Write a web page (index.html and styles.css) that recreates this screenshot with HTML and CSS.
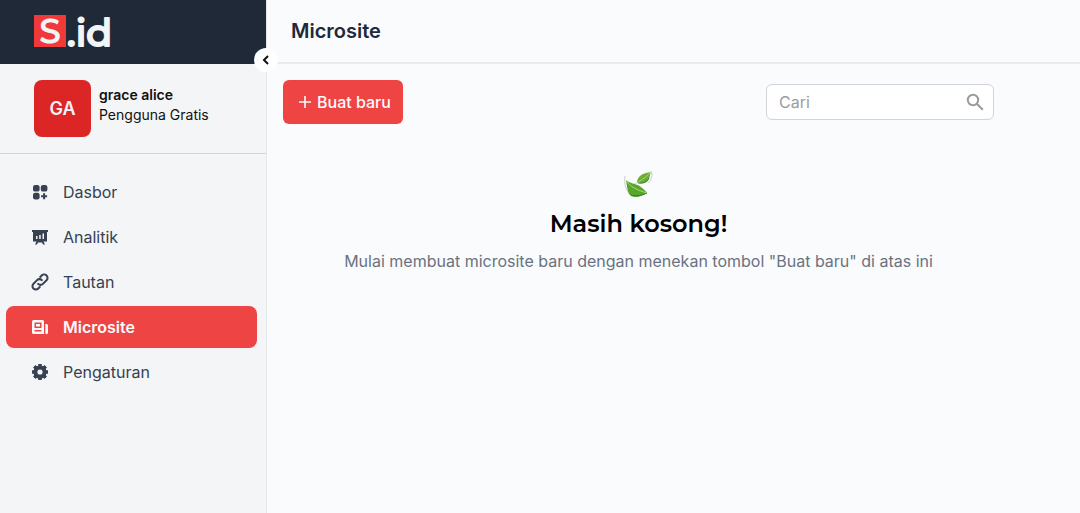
FILE: index.html
```html
<!DOCTYPE html>
<html lang="id">
<head>
<meta charset="utf-8">
<meta name="viewport" content="width=device-width, initial-scale=1">
<title>Microsite</title>
<link rel="stylesheet" href="styles.css">
</head>
<body>
<div class="app">
  <aside class="sidebar">
    <div class="brand">
      <a class="logo" href="#">
        <svg width="78" height="34" viewBox="0 0 78 34">
          <rect x="0" y="0" width="32" height="32" fill="#f03a3a"/>
          <text class="logo-mark" x="16" y="28" text-anchor="middle">S</text>
          <text class="logo-rest" x="33" y="31">.id</text>
        </svg>
      </a>
      <button class="collapse" type="button" aria-label="Ciutkan menu">
        <svg width="12" height="12" viewBox="0 0 12 12"><path d="M8 2 4 6l4 4" fill="none" stroke="currentColor" stroke-width="2"/></svg>
      </button>
    </div>
    <div class="profile">
      <div class="avatar">GA</div>
      <div class="who">
        <div class="name">grace alice</div>
        <div class="plan">Pengguna Gratis</div>
      </div>
    </div>
    <nav class="menu">
      <a class="item" href="#">
        <svg class="icon" viewBox="0 0 18 18" fill="currentColor"><rect x="2" y="2" width="6.600" height="6.600" rx="2.200"/><rect x="9.800" y="2" width="6.600" height="6.600" rx="2.200"/><rect x="2" y="9.800" width="6.600" height="6.600" rx="2.200"/><path d="M13.100 10.200v6M10.100 13.200h6" stroke="currentColor" stroke-width="2"/></svg>
        Dasbor</a>
      <a class="item" href="#">
        <svg class="icon" viewBox="0 0 18 18"><path fill="currentColor" fill-rule="evenodd" d="M1 2h16v2h-1v9.500h-3.500l1.500 3h-2l-1-2H7l-1 2H4l1.500-3H2V4H1zM5 8v3h1.500V8zM8.200 7v4h1.500V7zM11.500 5.500V11H13V5.500z"/></svg>
        Analitik</a>
      <a class="item" href="#">
        <svg class="icon" viewBox="0 0 24 24" fill="none" stroke="currentColor" stroke-width="2.700" stroke-linecap="round" stroke-linejoin="round"><path d="M14.500 9.500a4.500 4.500 0 0 0-6.400 0L3.300 14.300a4.500 4.500 0 0 0 6.400 6.400l2-2M9.500 14.500a4.500 4.500 0 0 0 6.400 0l4.800-4.800a4.500 4.500 0 0 0-6.400-6.400l-2 2"/></svg>
        Tautan</a>
      <a class="item active" href="#" aria-current="page">
        <svg class="icon" viewBox="0 0 18 18"><path fill="currentColor" fill-rule="evenodd" d="M2.500 2h9a1.500 1.500 0 0 1 1.500 1.500V16H2.500A1.500 1.500 0 0 1 1 14.500v-11A1.500 1.500 0 0 1 2.500 2zM3.500 4.500v5.500h7V4.500zM5 6h4v2.500H5zM3.500 12v1.500h7V12zM14.300 6h1.200A1.500 1.500 0 0 1 17 7.500v7a1.500 1.500 0 0 1-2.700 1z"/></svg>
        Microsite</a>
      <a class="item" href="#">
        <svg class="icon" viewBox="0 0 18 18"><g fill="none" stroke="currentColor"><circle cx="9" cy="9" r="4.600" stroke-width="4"/><path stroke-width="3.600" d="M9 1v3M9 14v3M1 9h3M14 9h3M3.300 3.300l2.100 2.100M12.600 12.600l2.100 2.100M14.700 3.300l-2.100 2.100M5.400 12.600l-2.100 2.100"/></g></svg>
        Pengaturan</a>
    </nav>
  </aside>
  <div class="page">
    <header class="topbar"><h1>Microsite</h1></header>
    <main class="content">
      <div class="toolbar">
        <button class="create" type="button">
          <svg width="12" height="12" viewBox="0 0 12 12"><path d="M6 0v12M0 6h12" stroke="currentColor" stroke-width="1.600"/></svg>
          Buat baru
        </button>
        <label class="search">
          <input type="search" placeholder="Cari" aria-label="Cari">
          <svg width="18" height="18" viewBox="0 0 18 18" fill="none" stroke="currentColor" stroke-width="2"><circle cx="7" cy="7" r="5.200"/><path d="m10.800 10.800 6 6"/></svg>
        </label>
      </div>
      <section class="empty">
        <svg class="leaf" viewBox="0 0 30 28"><path d="M1 6c-1 6 0 12 4 17M27 1c2 4 1 8-3 12" fill="none" stroke="#c9cecb"/><path d="M27 2C20 3 14 5 13 12c4 2 10 2 12-3C26 6 26 4 27 2z" fill="#6aae35"/><path d="M2 10c5 5 13 2 21 13-5 4-15 6-18 1C3 20 3 15 2 10z" fill="#59a52d"/><path d="M11 14c5-3 10-6 16-12M2 10c4 7 11 10 21 13" fill="none" stroke="#b3dc72" stroke-width=".9"/><path d="M7 25c5 2 12 0 16-2M14 13c5 1 9-1 11-5" fill="none" stroke="#2f7621" stroke-width=".8"/></svg>
        <h2>Masih kosong!</h2>
        <p>Mulai membuat microsite baru dengan menekan tombol "Buat baru" di atas ini</p>
      </section>
    </main>
  </div>
</div>
</body>
</html>
```
FILE: styles.css
```css
* { box-sizing: border-box; }
body { margin: 0; font-family: Inter, "Liberation Sans", sans-serif; font-size: 16px; color: #111; background: #f9fbfd; }
h1, h2, p { margin: 0; }
a { color: inherit; text-decoration: none; }
button { font: inherit; border: 0; cursor: pointer; }

.app { display: grid; grid-template-columns: 267px 1fr; min-height: 100vh; }
.sidebar { background: #f3f5f7; border-right: 1px solid #e5e7eb; }
.brand { position: relative; display: flex; align-items: center; height: 64px; padding-left: 34px; background: #1f2937; }
.logo svg { display: block; overflow: visible; }
.logo text { font-family: Montserrat, Inter, sans-serif; fill: #f3f4f6; stroke: #f3f4f6; stroke-linejoin: round; }
.logo-mark { font-size: 34px; font-weight: 500; stroke-width: 1px; }
.logo-rest { font-size: 38px; font-weight: 500; stroke-width: 2px; }
.collapse { position: absolute; right: -12px; bottom: -8px; display: grid; place-items: center; width: 24px; height: 24px; padding: 0; border-radius: 50%; background: #fff; color: #111; }

.profile { display: flex; gap: 8px; padding: 16px 16px 16px 34px; border-bottom: 1px solid #d1d5db; }
.avatar { display: grid; place-items: center; width: 57px; height: 57px; border-radius: 8px; background: #dc2626; color: #f3f4f6; font-size: 18px; font-weight: 600; }
.who { padding-top: 5px; font-size: 14px; line-height: 20px; }
.name { font-weight: 600; }

.menu { display: grid; gap: 3px; padding: 17px 9px 16px 6px; }
.item { display: flex; align-items: center; gap: 14px; height: 42px; padding-left: 25px; border-radius: 8px; color: #374151; font-size: 16px; }
.icon { width: 18px; height: 18px; }
.active { background: #ef4444; color: #f9fafb; font-weight: 600; }

.page { background: #f9fbfd; }
.topbar { display: flex; align-items: center; height: 64px; padding-left: 24px; border-bottom: 2px solid #e9ebee; }
.topbar h1 { font-size: 20px; font-weight: 600; color: #1f2937; }
.content { padding: 16px 86px 16px 16px; }
.toolbar { display: flex; align-items: center; justify-content: space-between; }
.create { display: flex; align-items: center; gap: 6px; height: 44px; padding: 0 12px 0 16px; border-radius: 6px; background: #ef4444; color: #f9fafb; font-weight: 500; }
.search { display: flex; align-items: center; width: 228px; height: 36px; padding: 0 9px 0 12px; border: 1px solid #d1d5db; border-radius: 6px; background: #fff; color: #9b9b9f; }
.search input { flex: 1; min-width: 0; padding: 0; border: 0; outline: 0; background: none; font: inherit; }
.search input::placeholder { color: #9b9b9f; }
.empty { display: flex; flex-direction: column; align-items: center; padding-top: 46px; }
.leaf { width: 30px; height: 28px; }
.empty h2 { margin-top: 10px; font-family: Montserrat, Inter, sans-serif; font-size: 24px; line-height: 32px; font-weight: 600; color: #000; }
.empty p { margin-top: 9px; line-height: 24px; color: #6b7280; }
```
